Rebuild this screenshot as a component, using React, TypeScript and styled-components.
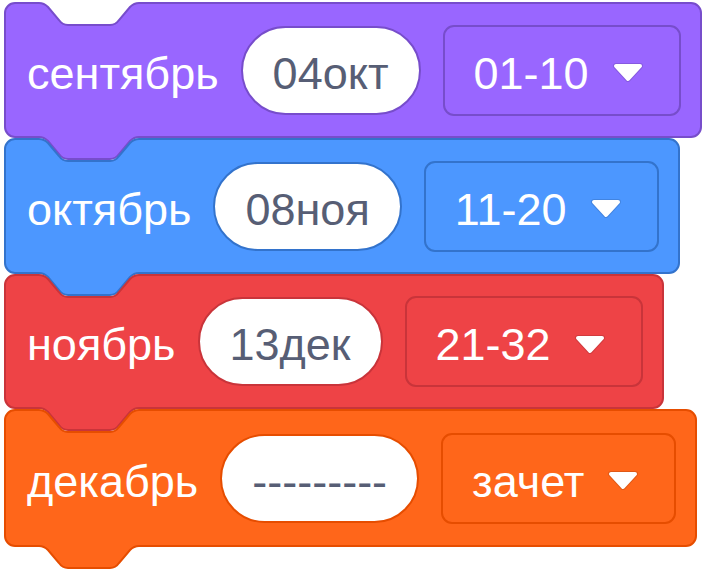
import React, { useLayoutEffect, useRef, useState } from "react";
import styled, { createGlobalStyle } from "styled-components";

const GlobalStyle = createGlobalStyle`
  html, body { margin: 0; padding: 0; background: #ffffff; }
  body { font-family: "Liberation Sans", Arial, sans-serif; }
`;

type Palette = { fill: string; stroke: string };

const PALETTES: Record<string, Palette> = {
  purple: { fill: "#9966FF", stroke: "#774DCB" },
  blue: { fill: "#4C97FF", stroke: "#3373CC" },
  red: { fill: "#EE4346", stroke: "#C9343A" },
  orange: { fill: "#FF661A", stroke: "#E64D00" },
};

const Stack = styled.div`
  display: flex;
  flex-direction: column;
  align-items: flex-start;
  padding: 2px 0 30px 4px;
`;

const BlockWrap = styled.div<{ $h: number }>`
  position: relative;
  display: inline-flex;
  align-items: center;
  height: ${(p) => p.$h}px;
  box-sizing: border-box;
  padding: 0 21px 0 23px;
`;

const Shape = styled.svg`
  position: absolute;
  left: 0;
  top: 0;
  overflow: visible;
  pointer-events: none;
`;

const Content = styled.div`
  position: relative;
  display: flex;
  align-items: center;
  gap: 22px;
`;

const Label = styled.span`
  color: #ffffff;
  font-size: 45px;
  line-height: 1;
  padding-top: 6px;
  white-space: nowrap;
`;

const Oval = styled.div<{ $stroke: string }>`
  display: flex;
  align-items: center;
  justify-content: center;
  height: 89px;
  box-sizing: border-box;
  padding: 0 30px;
  background: #ffffff;
  border: 2px solid ${(p) => p.$stroke};
  border-radius: 45px;
`;

const OvalText = styled.span`
  color: #575e75;
  font-size: 45px;
  line-height: 1;
  padding-top: 6px;
  white-space: nowrap;
`;

const Dropdown = styled.div<{ $stroke: string; $fill: string }>`
  display: flex;
  align-items: center;
  gap: 23px;
  height: 91px;
  box-sizing: border-box;
  padding: 0 35px 0 29px;
  background: ${(p) => p.$fill};
  border: 2px solid ${(p) => p.$stroke};
  border-radius: 11px;
`;

const DropText = styled.span`
  color: #ffffff;
  font-size: 45px;
  line-height: 1;
  padding-top: 6px;
  white-space: nowrap;
`;

const Arrow = () => (
  <svg width="32" height="19" viewBox="-1 -1 32 19" style={{ display: "block", marginTop: 5 }}>
    <path
      d="M3,2 L27,2 L15,15 Z"
      fill="rgba(0,0,0,0.12)"
      stroke="rgba(0,0,0,0.12)"
      strokeWidth="6"
      strokeLinejoin="round"
    />
    <path
      d="M3,2 L27,2 L15,15 Z"
      fill="#ffffff"
      stroke="#ffffff"
      strokeWidth="4"
      strokeLinejoin="round"
    />
  </svg>
);

const R = 10;
const NS = 34;
const NW = 100;

function blockPath(w: number, h: number) {
  const x0 = 1;
  const y0 = 1;
  const x1 = w - 1;
  const y1 = h - 1;
  const notchDown = "c 4,0 7,2 9,4 l 11,13 c 2,3 5,5 9,5 h 42 c 4,0 7,-2 9,-5 l 11,-13 c 2,-2 5,-4 9,-4";
  const tabDown = "c -4,0 -7,2 -9,4 l -11,13 c -2,3 -5,5 -9,5 h -42 c -4,0 -7,-2 -9,-5 l -11,-13 c -2,-2 -5,-4 -9,-4";
  return [
    `M ${x0},${y0 + R}`,
    `A ${R},${R} 0 0 1 ${x0 + R},${y0}`,
    `H ${x0 + NS}`,
    notchDown,
    `H ${x1 - R}`,
    `A ${R},${R} 0 0 1 ${x1},${y0 + R}`,
    `V ${y1 - R}`,
    `A ${R},${R} 0 0 1 ${x1 - R},${y1}`,
    `H ${x0 + NS + NW}`,
    tabDown,
    `H ${x0 + R}`,
    `A ${R},${R} 0 0 1 ${x0},${y1 - R}`,
    "Z",
  ].join(" ");
}

type BlockProps = {
  color: keyof typeof PALETTES;
  label: string;
  value: string;
  option: string;
  height: number;
};

const Block: React.FC<BlockProps> = ({ color, label, value, option, height }) => {
  const ref = useRef<HTMLDivElement>(null);
  const [size, setSize] = useState({ w: 0, h: height });
  const pal = PALETTES[color];

  useLayoutEffect(() => {
    const el = ref.current;
    if (!el) return;
    const update = () => setSize({ w: el.offsetWidth, h: el.offsetHeight });
    update();
    const ro = new ResizeObserver(update);
    ro.observe(el);
    return () => ro.disconnect();
  }, []);

  return (
    <BlockWrap ref={ref} $h={height}>
      {size.w > 0 && (
        <Shape width={size.w} height={size.h + 24}>
          <path d={blockPath(size.w, size.h)} fill={pal.fill} stroke={pal.stroke} strokeWidth="2" />
        </Shape>
      )}
      <Content>
        <Label>{label}</Label>
        <Oval $stroke={pal.stroke}>
          <OvalText>{value}</OvalText>
        </Oval>
        <Dropdown $stroke={pal.stroke} $fill={pal.fill}>
          <DropText>{option}</DropText>
          <Arrow />
        </Dropdown>
      </Content>
    </BlockWrap>
  );
};

const blocks: BlockProps[] = [
  { color: "purple", label: "сентябрь", value: "04окт", option: "01-10", height: 136 },
  { color: "blue", label: "октябрь", value: "08ноя", option: "11-20", height: 136 },
  { color: "red", label: "ноябрь", value: "13дек", option: "21-32", height: 135 },
  { color: "orange", label: "декабрь", value: "---------", option: "зачет", height: 138 },
];

export default function App() {
  return (
    <>
      <GlobalStyle />
      <Stack>
        {blocks.map((b) => (
          <Block key={b.label} {...b} />
        ))}
      </Stack>
    </>
  );
}
